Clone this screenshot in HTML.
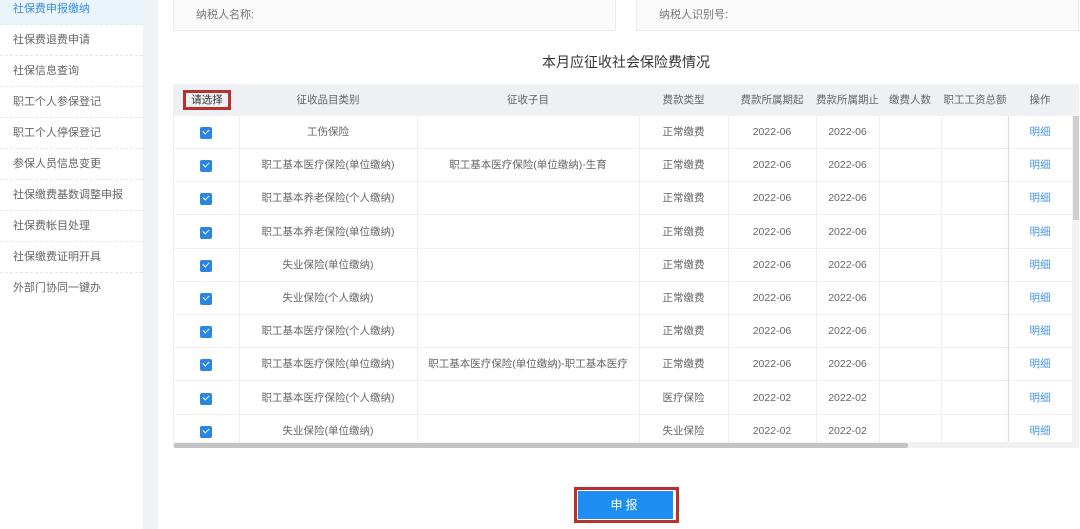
<!DOCTYPE html>
<html><head><meta charset="utf-8"><style>
*{margin:0;padding:0;box-sizing:border-box}
body{width:1080px;height:529px;overflow:hidden;background:#fff;font-family:"Liberation Sans","Noto Sans CJK SC",sans-serif;color:#666;position:relative}
.side{position:absolute;left:0;top:0;width:143px;height:529px;background:#fff}
.si{position:absolute;left:0;width:143px;height:31px;font-size:11px;line-height:31px;padding-left:13px;color:#666;border-bottom:1px dashed #e6e6e6}
.si.on{background:#eaf4fd;color:#3a8ee6}
.band{position:absolute;left:143px;top:0;width:15px;height:529px;background:#eff1f4}
.box{position:absolute;top:0;height:31px;background:#fafafa;border:1px solid #ececec;border-top:none;font-size:11px;line-height:30px;padding-left:22px;color:#777}
.title{position:absolute;left:173px;width:906px;top:52px;text-align:center;font-size:14px;color:#333}
.tbl{position:absolute;left:173px;top:84px;width:899px;height:364px;overflow:hidden;border-left:1px solid #eee}
.hd{position:absolute;left:0;top:0;width:899px;height:32px;background:#eef0f4}
.c{position:absolute;text-align:center;font-size:10.5px;white-space:nowrap;overflow:hidden;height:33px;line-height:33px;color:#666}
.row{position:absolute;left:0;width:899px;height:33px;border-bottom:1px solid #f0f0f0}
.vl{position:absolute;top:32px;width:1px;height:332px;background:#f0f0f0}
.cb{position:absolute;width:12px;height:12px;background:#2b86e0;border-radius:2px}
.cb:after{content:"";position:absolute;left:3px;top:2px;width:5px;height:3px;border-left:1.5px solid #fff;border-bottom:1.5px solid #fff;transform:rotate(-45deg)}
.lk{color:#4a96e6}
</style></head><body>
<div class="side">
<div class="si on" style="top:-6px">社保费申报缴纳</div>
<div class="si" style="top:25px">社保费退费申请</div>
<div class="si" style="top:56px">社保信息查询</div>
<div class="si" style="top:87px">职工个人参保登记</div>
<div class="si" style="top:118px">职工个人停保登记</div>
<div class="si" style="top:149px">参保人员信息变更</div>
<div class="si" style="top:180px">社保缴费基数调整申报</div>
<div class="si" style="top:211px">社保费帐目处理</div>
<div class="si" style="top:242px">社保缴费证明开具</div>
<div class="si" style="top:273px;border-bottom:none">外部门协同一键办</div>
</div>
<div class="band"></div>
<div class="box" style="left:173px;width:443px">纳税人名称:</div>
<div class="box" style="left:636px;width:443px">纳税人识别号:</div>
<div class="title">本月应征收社会保险费情况</div>
<div class="tbl">
<div class="hd"></div>
<div class="c" style="left:65px;width:178px;top:0">征收品目类别</div>
<div class="c" style="left:243px;width:222px;top:0">征收子目</div>
<div class="c" style="left:465px;width:89px;top:0">费款类型</div>
<div class="c" style="left:554px;width:88px;top:0">费款所属期起</div>
<div class="c" style="left:642px;width:63px;top:0">费款所属期止</div>
<div class="c" style="left:705px;width:62px;top:0">缴费人数</div>
<div class="c" style="left:767px;width:68px;top:0">职工工资总额</div>
<div class="c" style="left:835px;width:62px;top:0">操作</div>
<div style="position:absolute;left:9px;top:6px;width:48px;height:20px;border:3px solid #b8312c;font-size:10.5px;line-height:14px;text-align:center;color:#333">请选择</div>
<div id="rows"></div>
<div class="vl" style="left:65px"></div><div class="vl" style="left:243px"></div><div class="vl" style="left:465px"></div><div class="vl" style="left:554px"></div><div class="vl" style="left:642px"></div><div class="vl" style="left:705px"></div><div class="vl" style="left:767px"></div><div class="vl" style="left:834px;background:#ddd;box-shadow:-2px 0 3px rgba(0,0,0,.08)"></div>
<div style="position:absolute;left:0;top:358px;width:899px;height:6px;background:#f0f0f0"></div>
<div style="position:absolute;left:0;top:359px;width:734px;height:5px;background:#c4c4c4;border-radius:2px"></div>
</div>
<div style="position:absolute;left:1072px;top:84px;width:7px;height:364px;background:#f2f2f2"></div>
<div style="position:absolute;left:1073px;top:116px;width:6px;height:104px;background:#cfcfcf"></div>
<div style="position:absolute;left:574px;top:487px;width:105px;height:36px;border:3px solid #b8312c;padding:1px">
<div style="width:95px;height:28px;background:#1e8ef5;color:#fff;font-size:12px;text-align:center;line-height:28px;letter-spacing:3px">申报</div></div>
<script>
var d=[["工伤保险","","正常缴费","2022-06","2022-06"],["职工基本医疗保险(单位缴纳)","职工基本医疗保险(单位缴纳)-生育","正常缴费","2022-06","2022-06"],["职工基本养老保险(个人缴纳)","","正常缴费","2022-06","2022-06"],["职工基本养老保险(单位缴纳)","","正常缴费","2022-06","2022-06"],["失业保险(单位缴纳)","","正常缴费","2022-06","2022-06"],["失业保险(个人缴纳)","","正常缴费","2022-06","2022-06"],["职工基本医疗保险(个人缴纳)","","正常缴费","2022-06","2022-06"],["职工基本医疗保险(单位缴纳)","职工基本医疗保险(单位缴纳)-职工基本医疗","正常缴费","2022-06","2022-06"],["职工基本医疗保险(个人缴纳)","","医疗保险","2022-02","2022-02"],["失业保险(单位缴纳)","","失业保险","2022-02","2022-02"]];
var h="";d.forEach(function(r,i){var t=32+i*33.2;h+='<div class="row" style="top:'+t+'px"></div><div class="cb" style="left:26px;top:'+(t+11)+'px"></div>';
var L=[[65,178],[243,222],[465,89],[554,88],[642,63]];r.forEach(function(v,j){h+='<div class="c" style="left:'+L[j][0]+'px;width:'+L[j][1]+'px;top:'+t+'px">'+v+'</div>'});
h+='<div class="c lk" style="left:835px;width:62px;top:'+t+'px">明细</div>'});
document.getElementById("rows").innerHTML=h;
</script>
</body></html>
